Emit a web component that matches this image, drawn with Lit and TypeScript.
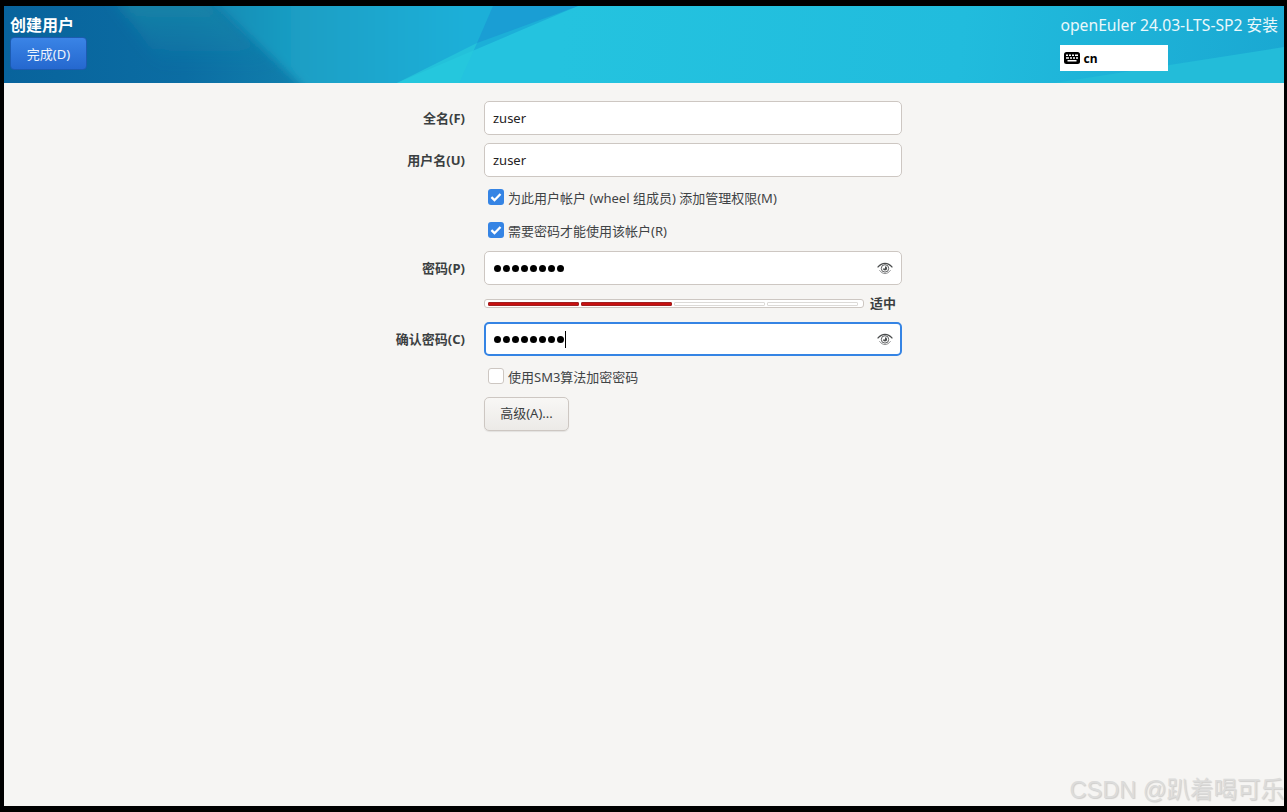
import { LitElement, html, css, svg } from "lit";
import { customElement } from "lit/decorators.js";

const eye = html`<svg class="eye" viewBox="0 0 16 13" width="16" height="13" fill="none">
  <path d="M.6 5.4C3 2.6 5.4 1.4 8 1.4s5 1.2 7.4 4" stroke="#4a4c4d" stroke-width="1.1"/>
  <path d="M2.4 8.2C4 10.4 6 11.6 8 11.6s4-1.2 5.6-3.4" stroke="#4a4c4d" stroke-width=".6"/>
  <circle cx="8" cy="6.4" r="3.7" stroke="#4a4c4d" stroke-width=".9"/>
  <path d="M8 4.3a2.1 2.1 0 1 1-2.1 2.1H8z" fill="#4a4c4d"/>
</svg>`;

const check = svg`<path d="M3.4 8.2l3.1 3 6-6.2" fill="none" stroke="#fff" stroke-width="2.3"/>`;

@customElement("app-root")
export class AppRoot extends LitElement {
  static styles = css`
    :host {
      display: block;
      width: 1287px;
      height: 812px;
      box-sizing: border-box;
      background: #000;
      padding: 6px 3px 6px 4px;
      font-family: "Noto Sans", "Noto Sans CJK SC", sans-serif;
      color: #2e3436;
      font-size: 13px;
    }
    .window {
      position: relative;
      height: 100%;
      display: flex;
      flex-direction: column;
      background: #f6f5f3;
      overflow: hidden;
    }
    header {
      position: relative;
      height: 77px;
      flex: none;
      display: flex;
      justify-content: space-between;
      box-sizing: border-box;
      padding: 9px 6px 0 6px;
      color: #fff;
    }
    .art {
      position: absolute;
      inset: 0;
      width: 100%;
      height: 100%;
    }
    .left, .right { position: relative; }
    .left {
      display: flex;
      flex-direction: column;
      gap: 1px;
      align-items: flex-start;
    }
    h1 {
      margin: 0;
      height: 21px;
      font-size: 16px;
      font-weight: 700;
      line-height: 21px;
    }
    .done {
      width: 77px;
      height: 33px;
      box-sizing: border-box;
      border: 1px solid #1c5bb0;
      border-radius: 4px;
      background: linear-gradient(#3a84e6, #2568cf);
      color: #eef4fc;
      font: inherit;
      font-size: 13px;
      padding: 0;
    }
    .right {
      display: flex;
      flex-direction: column;
      align-items: flex-start;
      gap: 9px;
    }
    .product {
      font-size: 15.7px;
      height: 21px;
      line-height: 21px;
      white-space: nowrap;
      color: #eaf8fb;
    }
    .kbd {
      width: 108px;
      height: 26px;
      background: #fff;
      color: #000;
      display: flex;
      align-items: center;
      gap: 3px;
      padding-left: 4px;
      box-sizing: border-box;
      font-size: 12px;
      font-weight: 700;
    }
    main {
      display: grid;
      grid-template-columns: 461px 418px;
      column-gap: 19px;
      align-content: start;
      padding-top: 18px;
    }
    .label {
      grid-column: 1;
      justify-self: end;
      align-self: center;
      font-weight: 700;
      color: #3b3f41;
      font-size: 13px;
      padding-bottom: 2px;
    }
    .entry {
      grid-column: 2;
      height: 34px;
      box-sizing: border-box;
      border: 1px solid #cdc7c2;
      border-radius: 5px;
      background: #fff;
      display: flex;
      align-items: center;
      justify-content: space-between;
      padding: 0 8px;
      font-size: 13px;
      color: #1f2224;
    }
    .mt8 { margin-top: 8px; }
    .mt9 { margin-top: 9px; }
    .mt10 { margin-top: 10px; }
    .mt11 { margin-top: 11px; }
    .mt14 { margin-top: 14px; }
    .focus {
      border: 2px solid #3584e4;
      padding: 0 7px;
    }
    .dots {
      display: flex;
      gap: 2px;
      align-items: center;
      margin-left: 1px;
    }
    .dots i {
      width: 7px;
      height: 7px;
      border-radius: 50%;
      background: #000;
      display: block;
    }
    .caret {
      width: 1px;
      height: 17px;
      background: #000;
      margin-left: -1px;
    }
    .chk {
      grid-column: 2;
      display: flex;
      align-items: center;
      gap: 4px;
      padding-left: 4px;
      height: 22px;
      color: #3f4345;
      font-size: 13px;
      white-space: nowrap;
    }
    .box {
      width: 16px;
      height: 16px;
      border-radius: 3px;
      box-sizing: border-box;
      flex: none;
    }
    .box.on { background: #3584e4; }
    .box.off { background: #fff; border: 1px solid #cdc7c2; }
    .box svg { display: block; }
    .meter {
      grid-column: 2;
      display: flex;
      align-items: center;
      gap: 6px;
      height: 9px;
    }
    .strength {
      height: 9px;
      width: 380px;
      flex: none;
      box-sizing: border-box;
      border: 1px solid #cdc7c2;
      border-radius: 3px;
      background: #fff;
      display: flex;
      gap: 2px;
      padding: 1px 5px 1px 3px;
    }
    .strength span {
      flex: 1;
      background: #fff;
      border: 1px solid #dcdad7;
      border-radius: 1px;
      box-sizing: border-box;
      height: 4px;
      margin-top: 1px;
    }
    .strength span.on {
      background: #c81010;
      border-color: #a02020;
    }
    .level {
      font-size: 13px;
      font-weight: 700;
      line-height: 9px;
      color: #3b3f41;
      white-space: nowrap;
    }
    .adv {
      grid-column: 2;
      justify-self: start;
      width: 85px;
      height: 34px;
      box-sizing: border-box;
      border: 1px solid #cdc7c2;
      border-radius: 5px;
      background: linear-gradient(#f8f7f5, #eceae7);
      box-shadow: 0 1px 1px rgba(0, 0, 0, 0.08);
      font: inherit;
      font-size: 13px;
      color: #3b3f41;
      padding: 0 0 3px;
    }
    .mark {
      position: absolute;
      right: 0;
      bottom: 2px;
      font-family: "Liberation Sans", "Noto Sans CJK SC", sans-serif;
      font-size: 23.5px;
      line-height: 28px;
      color: #dcdcdb;
      text-shadow: 1px 1px 1px rgba(0, 0, 0, 0.16);
      white-space: nowrap;
    }
  `;

  private dots() {
    return Array.from({ length: 8 }, () => html`<i></i>`);
  }

  render() {
    return html`
      <div class="window">
        <header>
          <svg class="art" viewBox="0 0 1280 77" preserveAspectRatio="none">
            <defs>
              <linearGradient id="base" x1="0" x2="300" y1="0" y2="0" gradientUnits="userSpaceOnUse">
                <stop offset="0" stop-color="#08639c"/>
                <stop offset=".6" stop-color="#0b6da3"/>
                <stop offset="1" stop-color="#1180ad"/>
              </linearGradient>
              <linearGradient id="mid" x1="190" x2="460" y1="0" y2="0" gradientUnits="userSpaceOnUse">
                <stop offset="0" stop-color="#1587b0"/>
                <stop offset=".4" stop-color="#1a9fc5"/>
                <stop offset="1" stop-color="#1eafd8"/>
              </linearGradient>
              <linearGradient id="bright" x1="560" x2="1280" y1="0" y2="77" gradientUnits="userSpaceOnUse">
                <stop offset="0" stop-color="#24c3df"/>
                <stop offset=".55" stop-color="#21bcdd"/>
                <stop offset="1" stop-color="#1aa8d2"/>
              </linearGradient>
              <linearGradient id="band" x1="0" x2="0" y1="0" y2="1">
                <stop offset="0" stop-color="#1b8eaa" stop-opacity=".75"/>
                <stop offset=".8" stop-color="#1b8eaa" stop-opacity="0"/>
              </linearGradient>
              <filter id="soft" x="-30%" width="160%"><feGaussianBlur stdDeviation="7"/></filter>
              <filter id="edge" x="-5%" width="110%"><feGaussianBlur stdDeviation="4"/></filter>
            </defs>
            <rect width="1280" height="77" fill="url(#base)"/>
            <polygon points="110,-10 203,-10 290,77 170,77" fill="url(#band)" filter="url(#soft)"/>
            <polygon points="192,-20 320,100 620,100 620,-20" fill="url(#mid)" filter="url(#edge)"/>
            <polygon points="393,77 574,0 1280,0 1280,77" fill="url(#bright)"/>
            <polygon points="473,37 489,0 574,0" fill="#1a9ed4"/>
            <polygon points="393,77 473,37 455,77" fill="#27c9dc" opacity=".7"/>
            <polygon points="1050,77 1280,41 1280,77" fill="#23bcd9"/>
          </svg>
          <div class="left">
            <h1>创建用户</h1>
            <button class="done">完成(D)</button>
          </div>
          <div class="right">
            <div class="product">openEuler 24.03-LTS-SP2 安装</div>
            <div class="kbd">
              <svg width="16" height="12" viewBox="0 0 16 12">
                <rect width="16" height="12" rx="2.5" fill="#000"/>
                <path d="M2 2.4h2V4H2zM5 2.4h2V4H5zM8 2.4h2V4H8zM11 2.4h3V4h-3zM2 5.2h3v1.6H2zM6 5.2h2v1.6H6zM9 5.2h2v1.6H9zM12 5.2h2v1.6h-2zM3.5 8h9v1.6h-9z" fill="#fff"/>
              </svg>
              <span>cn</span>
            </div>
          </div>
        </header>
        <main>
          <div class="label">全名(F)</div>
          <div class="entry">zuser</div>
          <div class="label mt8">用户名(U)</div>
          <div class="entry mt8">zuser</div>
          <div class="chk mt9">
            <span class="box on"><svg viewBox="0 0 16 16" width="16" height="16">${check}</svg></span>
            <span>为此用户帐户 (wheel 组成员) 添加管理权限(M)</span>
          </div>
          <div class="chk mt11">
            <span class="box on"><svg viewBox="0 0 16 16" width="16" height="16">${check}</svg></span>
            <span>需要密码才能使用该帐户(R)</span>
          </div>
          <div class="label mt10">密码(P)</div>
          <div class="entry mt10"><span class="dots">${this.dots()}</span>${eye}</div>
          <div class="meter mt14">
            <div class="strength">
              <span class="on"></span><span class="on"></span><span></span><span></span>
            </div>
            <div class="level">适中</div>
          </div>
          <div class="label mt14">确认密码(C)</div>
          <div class="entry focus mt14">
            <span class="dots">${this.dots()}<span class="caret"></span></span>${eye}
          </div>
          <div class="chk mt9">
            <span class="box off"></span>
            <span>使用SM3算法加密密码</span>
          </div>
          <button class="adv mt10">高级(A)...</button>
        </main>
        <div class="mark">CSDN @趴着喝可乐</div>
      </div>
    `;
  }
}
